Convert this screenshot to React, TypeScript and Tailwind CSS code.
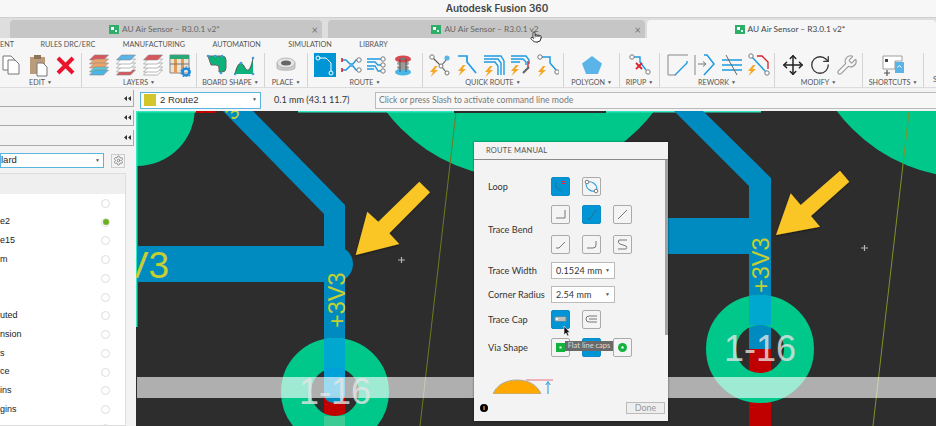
import React from "react";
import { Move, RotateCw, Wrench, Pointer, Settings } from "lucide-react";

const Bolt = ({ x, y, s = 1 }: { x: number; y: number; s?: number }) => (
  <path transform={`translate(${x} ${y}) scale(${s})`} d="M5 0 L0 6 H3 L0.5 11 L8 4 H4.5 L7.5 0Z" fill="#f5a623" />
);
const Node = ({ x, y, r = 2.2, c = "#777" }: { x: number; y: number; r?: number; c?: string }) => (
  <circle cx={x} cy={y} r={r} fill="#fff" stroke={c} strokeWidth="1" />
);
const Para = ({ y, f, s = "#888" }: { y: number; f: string; s?: string }) => (
  <path d={`M1.5 ${y + 5} L6.5 ${y} H20.5 L15.5 ${y + 5}Z`} fill={f} stroke={s} strokeWidth=".6" />
);

const Ico = ({ children }: { children: React.ReactNode }) => (
  <svg viewBox="0 0 22 24" className="h-[24px] w-[22px] shrink-0">{children}</svg>
);

const icons: Record<string, React.ReactNode> = {
  copy: <>
    <path d="M3 3h8l4 4v10H3z" fill="#fff" stroke="#777" />
    <path d="M8 7h7l4 4v10H8z" fill="#fff" stroke="#777" />
  </>,
  paste: <>
    <path d="M3 4h15v17H3z" fill="#bb9c7a" />
    <path d="M7 2h7v4H7z" fill="#8d7357" />
    <path d="M10 10h6l4 4v9H10z" fill="#fff" stroke="#777" />
  </>,
  del: <path d="M4 5 L19 20 M19 5 L4 20" stroke="#ea142c" strokeWidth="4" />,
  l1: <><Para y={2} f="#d9565c" /><Para y={6} f="#eba36a" /><Para y={10} f="#eba36a" /><Para y={14} f="#5cc8d8" /><Para y={17} f="#4ab6e6" /></>,
  l2: <><Para y={17} f="#d9565c" /><Para y={14} f="#fff" /><Para y={10} f="#fff" /><Para y={6} f="#fff" /><Para y={2} f="#5ab4e8" /></>,
  l3: <><Para y={17} f="#fff" /><Para y={14} f="#fff" /><Para y={10} f="#fff" /><Para y={6} f="#fff" /><Para y={2} f="#d9565c" /></>,
  l4: <>
    <path d="M1 2h19v18H1z" fill="#e9e4d6" stroke="#888" />
    <path d="M1 2h19v4H1z" fill="#2aa878" />
    <path d="M5 6h3v14H5zM12 6h3v14h-3z" fill="#e39a55" />
    <path d="M1 11h19" stroke="#777" />
    <circle cx="17" cy="19" r="3.4" fill="none" stroke="#1e88d8" strokeWidth="2.4" />
    <circle cx="17" cy="19" r="5" fill="none" stroke="#1e88d8" strokeWidth="1.2" strokeDasharray="1.6 1.6" />
  </>,
  b1: <>
    <path d="M2 3 H16 Q20 3 20 7 V15 Q20 19 16 19 H13 V15 Q13 12 10 12 H5 Z" fill="#0db27a" stroke="#666" />
    <circle cx="2" cy="3" r="1.3" fill="#3a9fe0" /><circle cx="9" cy="3" r="1.3" fill="#3a9fe0" /><circle cx="16" cy="3" r="1.3" fill="#3a9fe0" /><circle cx="15" cy="20" r="1.3" fill="#3a9fe0" />
  </>,
  b2: <>
    <path d="M1 21 C4 8 8 8 11 15 C14 20 17 16 19 5 V21Z" fill="#0db27a" />
    <path d="M1 21 C4 8 8 8 11 15 C14 20 17 16 19 5" fill="none" stroke="#555" />
    <circle cx="1" cy="21" r="1.3" fill="#3a9fe0" /><circle cx="19" cy="5" r="1.3" fill="#3a9fe0" /><circle cx="7" cy="10" r="1.3" fill="#3a9fe0" /><circle cx="19" cy="21" r="1.3" fill="#3a9fe0" />
  </>,
  place: <>
    <path d="M2 10 V15 C2 18 20 18 20 15 V10Z" fill="#cfcfcf" stroke="#999" strokeWidth=".6" />
    <ellipse cx="11" cy="10" rx="9" ry="5" fill="#e4e4e4" stroke="#999" strokeWidth=".6" />
    <ellipse cx="11" cy="10" rx="5" ry="2.5" fill="#666" />
  </>,
  route: <>
    <path d="M0 0h22v24H0z" fill="#0096d6" />
    <path d="M5 5 H12 L17 10 V18" fill="none" stroke="#fff" strokeWidth="1" />
    <circle cx="4" cy="5" r="2" fill="none" stroke="#fff" /><circle cx="17" cy="20" r="2" fill="none" stroke="#fff" />
  </>,
  r2: <>
    <path d="M2 7 H6 L10 11 H13 L16 7 H18 M2 17 H6 L10 13 H13 L16 17 H18" fill="none" stroke="#1e9be0" strokeWidth="1.5" />
    <path d="M2 5 V9 M2 15 V19" stroke="#d8202c" strokeWidth="1.6" />
    <Node x={19} y={7} /><Node x={19} y={17} />
  </>,
  r3: <>
    <path d="M1 6 H15 M1 9 H9 L12 12 H15 M1 13 H9 L12 18 H15 M1 16 H8" fill="none" stroke="#1e9be0" strokeWidth="1.4" />
    <Node x={17} y={6} /><Node x={17} y={12} /><Node x={17} y={18} />
  </>,
  r4: <>
    <ellipse cx="11" cy="19" rx="8" ry="3.6" fill="#4ab6e6" />
    <ellipse cx="11" cy="14.5" rx="6" ry="2.6" fill="#9a9a9a" />
    <ellipse cx="11" cy="10.5" rx="6" ry="2.6" fill="#9a9a9a" />
    <ellipse cx="11" cy="6" rx="8" ry="3.6" fill="#d9474f" />
    <ellipse cx="11" cy="6" rx="3" ry="1.3" fill="#777" />
    <path d="M8 6v13M14 6v13" stroke="#444" strokeWidth=".8" />
  </>,
  q1: <>
    <path d="M4 5 L12 13 L18 6 M12 13 L17 19" fill="none" stroke="#555" strokeWidth="1.1" />
    <Node x={3} y={4} /><circle cx="18" cy="5" r="2.6" fill="#5ab4e8" /><Node x={12} y={13} r={2} /><Node x={18} y={20} r={2} />
    <Bolt x={1} y={13} />
  </>,
  q2: <>
    <path d="M2 3 H11 V9 L20 20" fill="none" stroke="#1e9be0" strokeWidth="1.7" />
    <Bolt x={2} y={12} />
  </>,
  q3: <>
    <path d="M1 3 H18 L21 8 V22 M1 6 H15 L18 10 V22 M1 9 H12 L15 13 V22" fill="none" stroke="#1e9be0" strokeWidth="1.4" />
    <Bolt x={2} y={13} />
  </>,
  q4: <>
    <path d="M1 3 H16 L19 7 V11 M1 6 H13 L16 9 V12 M1 9 H10" fill="none" stroke="#1e9be0" strokeWidth="1.4" />
    <path d="M18 8 V14" stroke="#d8202c" strokeWidth="1.4" />
    <path d="M13 20 L19 14" stroke="#666" strokeWidth="2.2" />
    <Bolt x={1} y={12} />
  </>,
  q5: <>
    <path d="M5 4 H13 V10 L19 17" fill="none" stroke="#1e9be0" strokeWidth="1.5" />
    <Node x={3} y={4} /><Node x={20} y={19} />
    <Bolt x={1} y={13} />
  </>,
  poly: <path d="M11 3 L21 10.5 L17 21 H5 L1 10.5Z" fill="#5ab4e8" />,
  rip: <>
    <path d="M5 4 H11 V9 L17 17" fill="none" stroke="#1e9be0" strokeWidth="1.4" />
    <Node x={3} y={4} /><Node x={19} y={19} />
    <path d="M7 10 L13 16 M13 10 L7 16" stroke="#e0202c" strokeWidth="1.8" />
  </>,
  w1: <>
    <path d="M21 2 H1 V22 H9" fill="none" stroke="#888" strokeWidth="1" />
    <path d="M8 22 L20 10 V8" fill="none" stroke="#1e9be0" strokeWidth="1.4" />
  </>,
  w2: <>
    <path d="M1 2 V22" stroke="#888" />
    <path d="M4 11 H11 M9 8.5 L12 11 L9 13.5" fill="none" stroke="#777" />
    <path d="M10 2 H13 L20 11 L10 22" fill="none" stroke="#1e9be0" strokeWidth="1.5" />
  </>,
  w3: <>
    <path d="M1 7 H21 M1 12 H21 M1 17 H21" stroke="#1e9be0" strokeWidth="1.3" />
    <path d="M5 2 L16 22" stroke="#666" strokeWidth="1" />
  </>,
  w4: <>
    <path d="M9 3 H14 L20 9 V16" fill="none" stroke="#d8202c" strokeWidth="1.3" />
    <path d="M4 4 L18 19" stroke="#1e9be0" strokeWidth="1.4" />
    <Node x={3} y={3} /><Node x={19} y={20} />
    <Bolt x={0} y={12} />
  </>,
  sc: <>
    <path d="M1 3 H20 V8 H13 V16 H1Z" fill="#fff" stroke="#888" strokeWidth=".8" />
    <path d="M3 6h3v3H3z" fill="#444" />
    <path d="M13 9h9v11h-9z" fill="#5ab4e8" />
    <path d="M15.5 14.5 L17.5 12.5 L19.5 14.5" fill="none" stroke="#fff" />
    <path d="M2 20 H8 M5 17 V23" stroke="#555" strokeWidth="1.2" />
  </>,
};

const TbIcon = ({ n }: { n: string }) => <Ico>{icons[n]}</Ico>;

const Group = ({ w, label, cls, children }: { w: string; label?: string; cls: string; children?: React.ReactNode }) => (
  <div className={`${w} flex h-[34px] shrink-0 flex-col border-r border-[#d4d4d4]`}>
    <div className={`flex h-[24px] items-center ${cls}`}>{children}</div>
    {label && (
      <div className="mt-[1px] flex h-[10px] items-center justify-center gap-[2px] text-[7.2px] leading-none text-[#555]">
        {label}
        <span className="text-[5px]">▼</span>
      </div>
    )}
  </div>
);

const TabIcon = () => (
  <svg viewBox="0 0 10 10" className="mr-[3px] h-[10px] w-[10px]">
    <path d="M0 1h10v9H0z" fill="#2fae6a" />
    <path d="M2 3h3v3H2z" fill="#fff" />
    <path d="M6 6h2v2H6z" fill="#cfe" />
  </svg>
);

const Tab = ({ w, text, active }: { w: string; text: string; active?: boolean }) => (
  <div className={`${w} grid h-[18px] grid-cols-[1fr_auto_1fr] items-center rounded-t-[4px] pr-[3px] text-[8.3px] ${active ? "bg-[#f6f6f6] text-[#444]" : "bg-[#c6c6c6] text-[#666]"}`}>
    <span />
    <span className="flex items-center whitespace-nowrap"><TabIcon />{text}</span>
    {active ? <span /> : <span className="justify-self-end pr-[1px] text-[11px] leading-none text-[#777]">×</span>}
  </div>
);

const sideRows = ["", "e2", "e15", "m", "", "", "uted", "nsion", "s", "ce", "ins", "gins", ""];

const Collapse = ({ cls }: { cls: string }) => (
  <div className={`flex w-[134px] items-center justify-end border-r border-b border-[#aaa] bg-[#f2f2f2] pr-[2px] ${cls}`}>
    <svg viewBox="0 0 7 5" className="h-[5px] w-[7px]"><path d="M3 0 V5 L0 2.5Z M7 0 V5 L4 2.5Z" fill="#333" /></svg>
  </div>
);

const Btn = ({ on, children }: { on?: boolean; children?: React.ReactNode }) => (
  <div className={`h-[19px] w-[19px] shrink-0 rounded-[2px] border ${on ? "border-[#0a8cc6] bg-[#0096d6]" : "border-[#aaa] bg-[#f4f4f4]"}`}>
    <svg viewBox="0 0 17 17" className="h-[17px] w-[17px]" fill="none" stroke="#777" strokeWidth="1">{children}</svg>
  </div>
);

const Sel = ({ v }: { v: string }) => (
  <div className="flex h-[17px] w-[64px] items-center justify-between whitespace-nowrap border border-[#bbb] bg-white pl-[4px] pr-[4px] text-[9px] tracking-[.1px] text-[#333]">
    {v}<span className="text-[5px] text-[#555]">▼</span>
  </div>
);

const Label = ({ t }: { t: string }) => <div className="w-[63px] shrink-0 whitespace-nowrap text-[9.2px] text-[#333]">{t}</div>;

const Pcb = () => (
  <svg viewBox="136 111 800 315" className="absolute inset-0 h-full w-full">
    <defs>
      <clipPath id="ringL"><circle cx="335" cy="392" r="54" /></clipPath>
      <clipPath id="ringR"><circle cx="760" cy="349" r="54" /></clipPath>
      <filter id="sh" x="-20%" y="-20%" width="140%" height="140%"><feDropShadow dx="0" dy="1" stdDeviation="1" floodOpacity=".5" /></filter>
    </defs>
    <rect x="136" y="111" width="800" height="315" fill="#2d2d2d" />
    <circle cx="137" cy="108" r="58" fill="#00c78a" />
    <circle cx="520" cy="10" r="168" fill="#00c78a" />
    <circle cx="971" cy="10" r="168" fill="#00c78a" />
    <path d="M456 112 L420 426" stroke="#6d7a22" strokeWidth="1" />
    <path d="M909 112 L873 426" stroke="#7c9428" strokeWidth="1" />
    {/* top edge */}
    <rect x="136" y="111" width="60" height="1.5" fill="#33e8c0" />
    <rect x="196" y="111" width="20" height="2" fill="#c00000" />
    <rect x="298" y="111" width="156" height="1.5" fill="#33e8c0" />
    <rect x="454" y="111" width="152" height="2" fill="#2d2d2d" />
    <rect x="606" y="111" width="155" height="1.5" fill="#33e8c0" />
    <rect x="136" y="111" width="1.5" height="216" fill="#33e8c0" />
    {/* left pane traces */}
    <rect x="324" y="397" width="21" height="29" fill="#c00000" />
    <path d="M223 111 H253 L345 205 V392 Q345 403 335 403 Q324 403 324 392 V214 Z" fill="#008bc0" />
    <rect x="137" y="246" width="198" height="36" fill="#008bc0" />
    <circle cx="335" cy="264" r="18" fill="#008bc0" />
    <circle cx="335" cy="392" r="39" fill="none" stroke="#00c78a" strokeWidth="30" />
    <g clipPath="url(#ringL)">
      <rect x="324" y="338" width="21" height="30" fill="#00a8cf" />
      <rect x="324" y="416" width="21" height="12" fill="#3ccb94" />
    </g>
    <rect x="324" y="368" width="21" height="28" fill="#00a0d8" />
    {/* right pane traces */}
    <rect x="749" y="349" width="22" height="77" fill="#c00000" />
    <path d="M668 111 H703 L771 178 V349 H749 V186 L674 111 Z" fill="#008bc0" />
    <rect x="668" y="218" width="90" height="36" fill="#008bc0" />
    <circle cx="760" cy="349" r="39" fill="none" stroke="#00c78a" strokeWidth="30" />
    <g clipPath="url(#ringR)">
      <rect x="749" y="295" width="22" height="30" fill="#00a8cf" />
    </g>
    {/* labels */}
    <g fill="#c6cf32" fontFamily="'Liberation Sans', sans-serif">
      <text x="169" y="278" fontSize="37" textAnchor="end">V3</text>
      <text transform="translate(345 328) rotate(-90)" fontSize="23.5">+3V3</text>
      <text transform="translate(769 293) rotate(-90)" fontSize="23.5">+3V3</text>
      <text transform="translate(233 121) rotate(-45)" fontSize="20">3</text>
    </g>
    {/* grey bar */}
    <rect x="137" y="377" width="799" height="21" fill="#fff" fillOpacity=".62" />
    <g fill="#e6e6e6" fillOpacity=".8" fontFamily="'Liberation Sans', sans-serif" fontSize="36" textAnchor="middle">
      <text x="335" y="404">1-16</text>
      <text x="760" y="361">1-16</text>
    </g>
    {/* arrows */}
    <path d="M355.7 255 L367.3 211.7 L378.3 221.7 L419.3 181.7 L430 192.3 L389.3 233.3 L399.3 244Z" fill="#f9c627" filter="url(#sh)" />
    <path d="M776 235 L790.7 193.3 L800.7 205 L840 170.7 L849.3 181.7 L811 216 L820 226.7Z" fill="#f9c627" filter="url(#sh)" />
    <path d="M398 260 H405 M401.5 257 V263 M861 248 H868 M864.5 245 V251" stroke="#b5b5b5" strokeWidth="1.2" />
  </svg>
);

export default function App() {
  return (
    <div className="flex h-[426px] w-[936px] flex-col overflow-hidden bg-[#f3f3f3] [font-family:Lato,sans-serif]">
      {/* title */}
      <div className="flex h-[17px] shrink-0 items-center justify-center bg-[#f7f7f7] pl-[58px] text-[10px] font-semibold text-[#444] [font-family:Inter,sans-serif]">
        Autodesk Fusion 360
      </div>
      {/* tabs */}
      <div className="relative flex h-[21px] shrink-0 items-end border-t border-[#cfcfcf] bg-[#dedede] pl-[10px]">
        <Tab w="w-[312px]" text="AU Air Sensor – R3.0.1 v2*" />
        <div className="w-[6px]" />
        <Tab w="w-[317px]" text="AU Air Sensor – R3.0.1 v2" />
        <div className="w-[2px]" />
        <Tab w="w-[289px]" text="AU Air Sensor – R3.0.1 v2*" active />
        <Pointer size={12} fill="#fff" strokeWidth={1.5} className="absolute left-[530px] top-[13px] text-black" />
      </div>
      {/* menu labels */}
      <div className="flex h-[14px] shrink-0 items-center gap-[27.5px] whitespace-nowrap bg-[#f6f6f6] text-[7.2px] text-[#555]">
        <span className="w-[13px]">ENT</span>
        <span>RULES DRC/ERC</span>
        <span>MANUFACTURING</span>
        <span>AUTOMATION</span>
        <span>SIMULATION</span>
        <span>LIBRARY</span>
      </div>
      {/* toolbar */}
      <div className="flex h-[36px] shrink-0 items-start whitespace-nowrap border-b border-[#dcdcdc] bg-[#f6f6f6] pt-[1px]">
        <Group w="w-[82px]" label="EDIT" cls="gap-[5px]"><TbIcon n="copy" /><TbIcon n="paste" /><TbIcon n="del" /></Group>
        <Group w="w-[115px]" label="LAYERS" cls="gap-[5px] pl-[6px]"><TbIcon n="l1" /><TbIcon n="l2" /><TbIcon n="l3" /><TbIcon n="l4" /></Group>
        <Group w="w-[68px]" label="BOARD SHAPE" cls="gap-[6px] pl-[9px]"><TbIcon n="b1" /><TbIcon n="b2" /></Group>
        <Group w="w-[43px]" label="PLACE" cls="justify-center"><TbIcon n="place" /></Group>
        <Group w="w-[115px]" label="ROUTE" cls="gap-[4px] pl-[6px]"><TbIcon n="route" /><TbIcon n="r2" /><TbIcon n="r3" /><TbIcon n="r4" /></Group>
        <Group w="w-[141px]" label="QUICK ROUTE" cls="gap-[5px] pl-[6px]"><TbIcon n="q1" /><TbIcon n="q2" /><TbIcon n="q3" /><TbIcon n="q4" /><TbIcon n="q5" /></Group>
        <Group w="w-[56px]" label="POLYGON" cls="justify-center"><TbIcon n="poly" /></Group>
        <Group w="w-[40px]" label="RIPUP" cls="justify-center"><TbIcon n="rip" /></Group>
        <Group w="w-[115px]" label="REWORK" cls="gap-[5px] pl-[7px]"><TbIcon n="w1" /><TbIcon n="w2" /><TbIcon n="w3" /><TbIcon n="w4" /></Group>
        <Group w="w-[88px]" label="MODIFY" cls="gap-[5px] pl-[7px]">
          <Move size={22} className="shrink-0 text-[#222]" strokeWidth={1.6} />
          <RotateCw size={22} className="shrink-0 text-[#333]" strokeWidth={1.4} />
          <Wrench size={22} className="shrink-0 text-[#999]" strokeWidth={1.2} />
        </Group>
        <Group w="w-[61px]" label="SHORTCUTS" cls="justify-center"><TbIcon n="sc" /></Group>
        <div className="flex h-[34px] flex-col justify-end pb-[1px] pl-[9px] text-[7.2px] text-[#555]">S</div>
      </div>
      {/* main */}
      <div className="flex min-h-0 flex-1 pt-[2px]">
        {/* sidebar */}
        <div className="flex w-[136px] shrink-0 flex-col">
          <Collapse cls="h-[17px]" />
          <Collapse cls="mt-[3px] h-[16px]" />
          <Collapse cls="mt-[4px] h-[16px]" />
          <div className="mt-[7px] flex items-center">
            <div className="flex h-[15px] w-[104px] items-center justify-between border border-[#5ab4e0] bg-white pr-[3px] text-[9.5px] text-[#222] [font-family:'Liberation_Sans',sans-serif]">
              lard<span className="text-[5px] text-[#555]">▼</span>
            </div>
            <div className="ml-[7px] flex h-[14px] w-[14px] items-center justify-center border border-[#ccc]">
              <Settings size={11} className="text-[#888]" strokeWidth={2} />
            </div>
          </div>
          <div className="mt-[5px] min-h-0 w-[126px] flex-1 overflow-hidden border border-l-0 border-[#ddd] bg-white">
            <div className="h-[20px] bg-[#efefef]" />
            {sideRows.map((r, i) => (
              <div key={i} className="flex h-[18.75px] items-center justify-between pr-[15px] text-[9px] text-[#222] [font-family:'Liberation_Sans',sans-serif]">
                <span>{r}</span>
                <span className="flex h-[9px] w-[9px] items-center justify-center rounded-full border border-[#ddd] bg-white">
                  {i === 1 && <span className="h-[6px] w-[6px] rounded-full bg-[#6bb01c]" />}
                </span>
              </div>
            ))}
          </div>
        </div>
        {/* right column */}
        <div className="flex min-w-0 flex-1 flex-col">
          <div className="flex h-[21px] shrink-0 items-center pb-[1px] pl-[4px] text-[9.1px] text-[#333]">
            <div className="flex h-[17px] w-[121px] items-center border border-[#5ab4e0] bg-white pl-[3px] pr-[3px] text-[9.5px] [font-family:'Liberation_Sans',sans-serif]">
              <span className="h-[12px] w-[12px] bg-[#d4c62a]" />
              <span className="ml-[4px] flex-1">2 Route2</span>
              <span className="text-[5px] text-[#555]">▼</span>
            </div>
            <span className="ml-[13px] w-[101px] whitespace-nowrap">0.1 mm (43.1 11.7)</span>
            <div className="flex h-[17px] flex-1 items-center border border-r-0 border-[#bbb] bg-[#f7f7f7] pl-[3px] text-[8.7px] text-[#777]">
              Click or press Slash to activate command line mode
            </div>
          </div>
          <div className="relative min-h-0 flex-1 overflow-hidden">
            <Pcb />
            {/* dialog */}
            <div className="absolute left-[338px] top-[31px] flex h-[279px] w-[194px] flex-col bg-[#f3f3f3] shadow-[0_0_2px_rgba(0,0,0,.5)]">
              <div className="flex h-[18px] shrink-0 items-center border-b border-[#8a8a8a] pl-[12px] text-[7.5px] tracking-[.2px] text-[#555]">ROUTE MANUAL</div>
              <div className="relative min-h-0 flex-1 overflow-hidden pl-[14px] pt-[17px]">
                <div className="absolute right-0 top-0 h-[175px] w-[3px] bg-[#a2a2a2]" />
                <div className="flex h-[19px] items-center">
                  <Label t="Loop" />
                  <div className="flex gap-[12px]">
                    <Btn on><path d="M4 4 V9 L9 13" stroke="#2a6f96" /><path d="M10 3 L13 6 M13 3 L10 6" stroke="#e0202c" /></Btn>
                    <Btn><ellipse cx="8.5" cy="8.5" rx="6" ry="4" transform="rotate(35 8.5 8.5)" stroke="#1e9be0" /><circle cx="4" cy="4" r="1.8" fill="#fff" /><circle cx="13" cy="13" r="1.8" fill="#fff" /></Btn>
                  </div>
                </div>
                <div className="mt-[9px] flex items-center">
                  <Label t="Trace Bend" />
                  <div className="grid grid-cols-3 gap-x-[12px] gap-y-[11px]">
                    <Btn><path d="M4 12 H13 V4" /></Btn>
                    <Btn on><path d="M4 13 H7 L12 5 H14" stroke="#2a6f96" /></Btn>
                    <Btn><path d="M4 13 L13 4" /></Btn>
                    <Btn><path d="M4 12 H7 L13 6" /></Btn>
                    <Btn><path d="M4 12 H10 Q13 12 13 9 V5" /></Btn>
                    <Btn><path d="M13 4 H5 Q3 7 6 8 L12 10 Q14 13 11 13 H4" /></Btn>
                  </div>
                </div>
                <div className="mt-[8px] flex items-center"><Label t="Trace Width" /><Sel v="0.1524 mm" /></div>
                <div className="mt-[7px] flex items-center"><Label t="Corner Radius" /><Sel v="2.54 mm" /></div>
                <div className="mt-[7px] flex items-center">
                  <Label t="Trace Cap" />
                  <div className="flex gap-[12px]">
                    <Btn on><path d="M3 6 H14 V10 H3Z" fill="#f4f4f4" stroke="#888" /><path d="M6 8 H14" stroke="#888" /></Btn>
                    <Btn><path d="M14 5 H6 Q3 5 3 8 Q3 11 6 11 H14" /><path d="M6 8 H14" /></Btn>
                  </div>
                </div>
                <div className="mt-[9px] flex items-center">
                  <Label t="Via Shape" />
                  <div className="flex gap-[12px]">
                    <Btn><path d="M4 4 H13 V13 H4Z" fill="#11b33c" stroke="none" /><path d="M7.5 7.5 H9.5 V9.5 H7.5Z" fill="#fff" stroke="none" /></Btn>
                    <Btn on />
                    <Btn><circle cx="8.5" cy="8.5" r="4.5" fill="#11b33c" stroke="none" /><circle cx="8.5" cy="8.5" r="1.2" fill="#fff" stroke="none" /></Btn>
                  </div>
                </div>
                <svg viewBox="0 0 70 15" className="mt-[22px] ml-[5px] h-[15px] w-[70px]">
                  <path d="M0 15 C4 5 14 1 24 1 C34 1 44 5 48 15Z" fill="#ffa800" stroke="#aaa" strokeWidth="1" />
                  <path d="M33 1 H60" stroke="#e87080" strokeWidth="1" />
                  <path d="M55 15 V4 M52.8 6 L55 2.5 L57.2 6" fill="none" stroke="#1e9be0" strokeWidth="1" />
                </svg>
                <div className="absolute left-[91px] top-[181px] flex h-[10px] w-[48px] items-center justify-center whitespace-nowrap bg-[#6a6a6a] text-[7.5px] leading-none text-[#ddd]">Flat line caps</div>
                <svg viewBox="0 0 8 12" className="absolute left-[89px] top-[165px] h-[12px] w-[8px]">
                  <path d="M1 1 V10 L3 8 L4.5 11 L6 10.4 L4.6 7.5 H7Z" fill="#111" stroke="#fff" strokeWidth=".6" />
                </svg>
              </div>
              <div className="flex h-[26px] shrink-0 items-center justify-between bg-[#f3f3f3] pl-[6px] pr-[3px]">
                <span className="flex h-[8px] w-[8px] items-center justify-center rounded-full bg-black text-[6px] font-bold leading-none text-white">i</span>
                <div className="flex h-[12px] w-[39px] items-center justify-center border border-[#bbb] bg-[#eee] text-[9px] text-[#999]">Done</div>
              </div>
            </div>
          </div>
        </div>
      </div>
    </div>
  );
}
